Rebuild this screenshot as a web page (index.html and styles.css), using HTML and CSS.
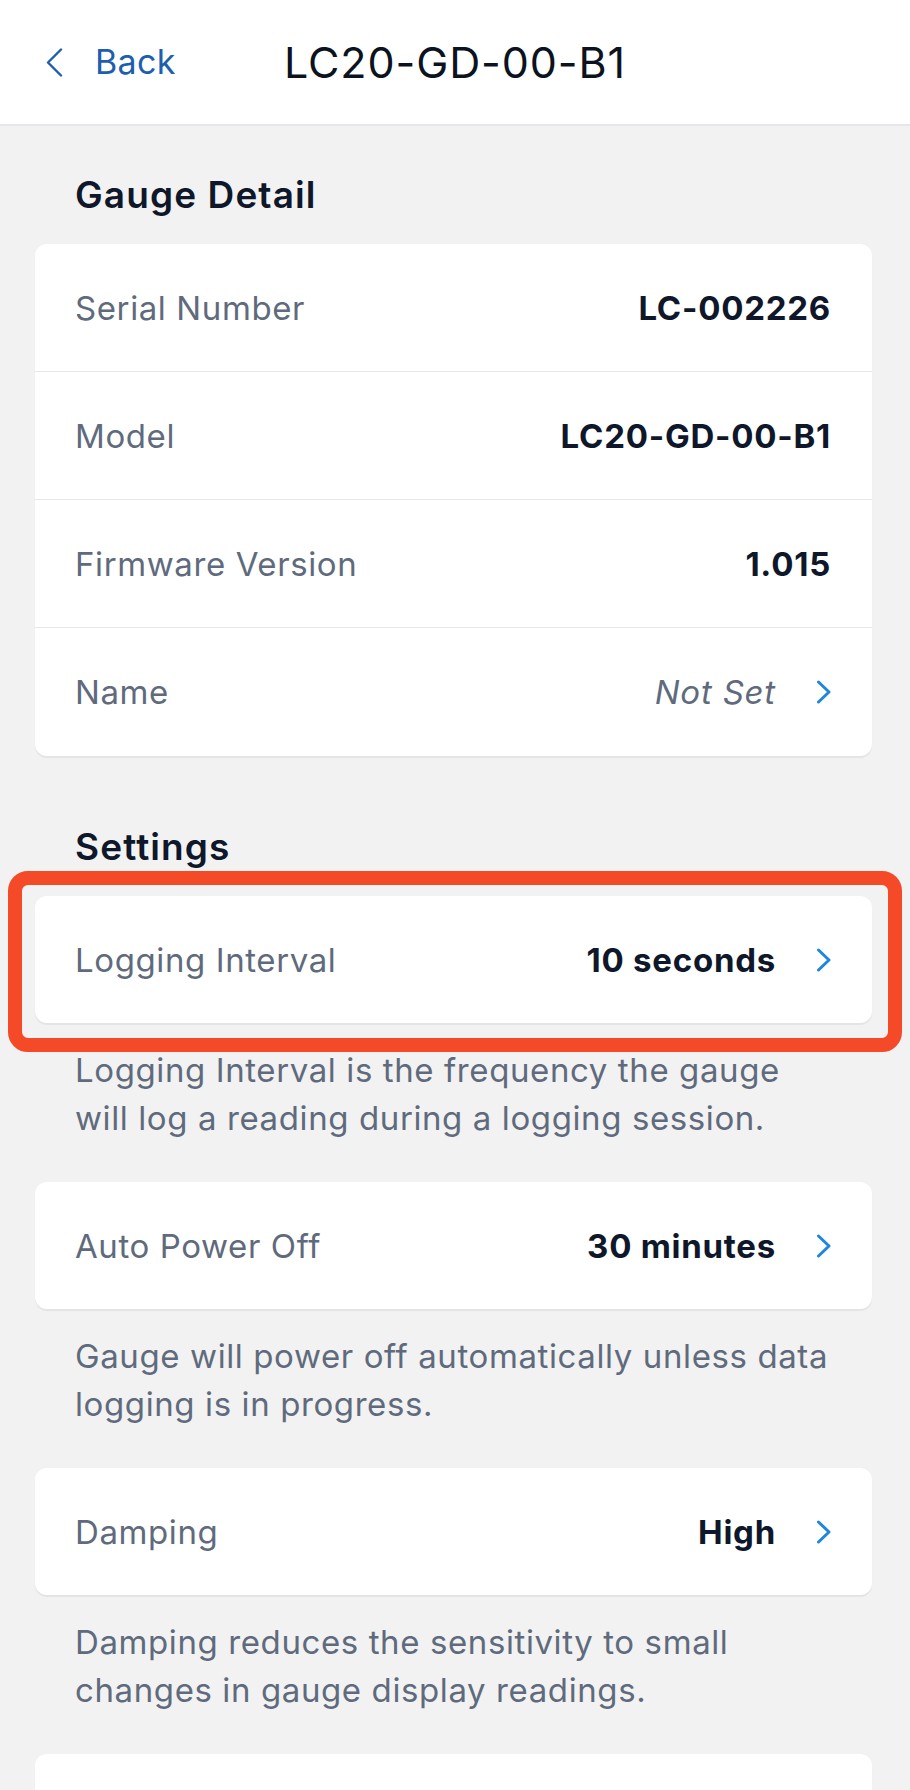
FILE: index.html
```html
<!DOCTYPE html>
<html lang="en">
<head>
<meta charset="utf-8">
<title>LC20-GD-00-B1</title>
<link rel="stylesheet" href="styles.css">
</head>
<body>
<header class="nav">
  <a class="back" href="#">
    <svg class="back-icon" width="17" height="29" viewBox="0 0 17 29" aria-hidden="true"><polyline points="15,1.5 2,14.5 15,27.5" fill="none" stroke="currentColor" stroke-width="2.4" stroke-linecap="round" stroke-linejoin="round"/></svg>
    <span>Back</span>
  </a>
  <h1 class="title">LC20-GD-00-B1</h1>
  <span class="spacer"></span>
</header>

<main class="content">
  <h2 class="section-title">Gauge Detail</h2>
  <section class="card">
    <div class="row"><span class="label">Serial Number</span><span class="value">LC-002226</span></div>
    <div class="row"><span class="label">Model</span><span class="value">LC20-GD-00-B1</span></div>
    <div class="row"><span class="label">Firmware Version</span><span class="value">1.015</span></div>
    <div class="row link"><span class="label">Name</span><span class="value placeholder">Not Set</span>
      <svg class="chev" width="16" height="24" viewBox="0 0 16 24" aria-hidden="true"><polyline points="2.5,2 13,12 2.5,22" fill="none" stroke="currentColor" stroke-width="3" stroke-linecap="round" stroke-linejoin="round"/></svg>
    </div>
  </section>

  <h2 class="section-title settings-title">Settings</h2>

  <div class="setting highlighted">
    <section class="card single">
      <div class="row link"><span class="label">Logging Interval</span><span class="value">10 seconds</span>
        <svg class="chev" width="16" height="24" viewBox="0 0 16 24" aria-hidden="true"><polyline points="2.5,2 13,12 2.5,22" fill="none" stroke="currentColor" stroke-width="3" stroke-linecap="round" stroke-linejoin="round"/></svg>
      </div>
    </section>
  </div>
  <p class="hint">Logging Interval is the frequency the gauge will log a reading during a logging session.</p>

  <div class="setting">
    <section class="card single">
      <div class="row link"><span class="label">Auto Power Off</span><span class="value">30 minutes</span>
        <svg class="chev" width="16" height="24" viewBox="0 0 16 24" aria-hidden="true"><polyline points="2.5,2 13,12 2.5,22" fill="none" stroke="currentColor" stroke-width="3" stroke-linecap="round" stroke-linejoin="round"/></svg>
      </div>
    </section>
  </div>
  <p class="hint">Gauge will power off automatically unless data logging is in progress.</p>

  <div class="setting">
    <section class="card single">
      <div class="row link"><span class="label">Damping</span><span class="value">High</span>
        <svg class="chev" width="16" height="24" viewBox="0 0 16 24" aria-hidden="true"><polyline points="2.5,2 13,12 2.5,22" fill="none" stroke="currentColor" stroke-width="3" stroke-linecap="round" stroke-linejoin="round"/></svg>
      </div>
    </section>
  </div>
  <p class="hint">Damping reduces the sensitivity to small changes in gauge display readings.</p>

  <div class="setting">
    <section class="card single">
      <div class="row"></div>
    </section>
  </div>
</main>
</body>
</html>
```
FILE: styles.css
```css
* { box-sizing: border-box; }

html, body {
  margin: 0;
  padding: 0;
}

body {
  background: #f2f2f2;
  font-family: Inter, "Noto Sans", "Liberation Sans", sans-serif;
  color: #0f172a;
  -webkit-font-smoothing: antialiased;
}

.nav {
  height: 126px;
  background: #ffffff;
  border-bottom: 2px solid #e4e6ea;
  display: grid;
  grid-template-columns: 1fr auto 1fr;
  align-items: center;
  padding: 0 46px;
}

.back {
  display: flex;
  align-items: center;
  gap: 32px;
  color: #1d5fae;
  text-decoration: none;
  font-size: 34px;
  font-weight: 400;
  letter-spacing: 0.3px;
  line-height: 1;
  justify-self: start;
}

.back-icon { display: block; }

.title {
  margin: 0;
  font-size: 43px;
  font-weight: 400;
  letter-spacing: 0.9px;
  color: #0b1220;
  line-height: 1;
}

.content {
  padding: 0 38px 0 35px;
}

.section-title {
  margin: 47px 0 27px 40px;
  font-size: 37px;
  line-height: 44px;
  font-weight: 600;
  letter-spacing: 1.1px;
  color: #0f172a;
}

.settings-title {
  margin-top: 69px;
}

.card {
  background: #ffffff;
  border-radius: 12px;
  box-shadow: 0 2px 1px rgba(15, 23, 42, 0.06);
}

.row {
  height: 128px;
  display: flex;
  align-items: center;
  padding: 0 41px 0 40px;
  border-bottom: 1px solid #e5e7eb;
  font-size: 33px;
  letter-spacing: 0.6px;
}

.row:last-child { border-bottom: none; height: 128px; }

.card.single .row { height: 127px; }

.label {
  color: #5f6b7d;
  flex: 1;
}

.value {
  font-weight: 700;
  letter-spacing: 0.75px;
  color: #0f172a;
}

.placeholder {
  font-weight: 400;
  font-style: italic;
  letter-spacing: 0.8px;
  color: #5f6b7d;
}

.chev {
  display: block;
  margin-left: 40px;
  margin-right: -1px;
  color: #1f86df;
}

.setting {
  position: relative;
}

.highlighted::after {
  content: "";
  position: absolute;
  top: -25px;
  bottom: -29px;
  left: -27px;
  right: -30px;
  border: 14px solid #f44a28;
  border-radius: 20px;
  pointer-events: none;
}

.hint {
  margin: 23px 0 40px 0;
  padding: 0 41px 0 40px;
  font-size: 33px;
  line-height: 48px;
  letter-spacing: 0.6px;
  color: #5f6b7d;
}
```
